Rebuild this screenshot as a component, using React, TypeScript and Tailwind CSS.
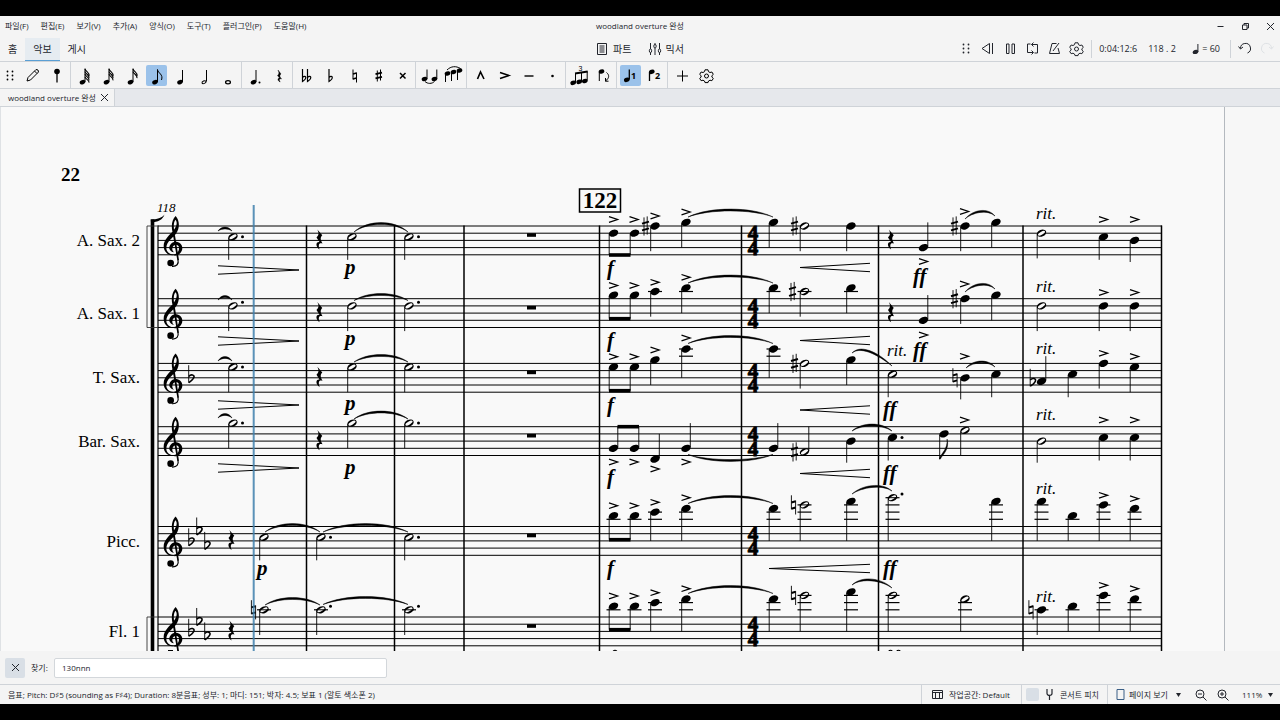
import { useState } from 'react';

type Accidental = 'sharp' | 'flat' | 'natural';

interface Note {
  x: number;
  /** Half spaces below the top line */
  p: number;
  half?: boolean;
  up?: boolean;
  dot?: boolean;
  acc?: Accidental;
  accX?: number;
  beam?: number;
  flag?: boolean;
}

type Slur = [x1: number, y1: number, x2: number, y2: number, peak: number];
type Mark = [x: number, y: number];

interface Staff {
  name: string;
  top: number;
  flats: Mark[];
  notes: Note[];
  rests: number[];
  slurs: Slur[];
  accents: Mark[];
  dims: number[];
  crescs: Mark[];
  beam: number;
  texts: { t: string; x: number; y: number }[];
}

const HALF = 3.6;
const BARLINES = [306.5, 394.5, 464, 599.5, 741.5, 878.5, 1023, 1161.5];
const THREE_FLATS: Mark[] = [[191, 4], [199, 1], [207, 5]];

const STAVES: Staff[] = [
  {
    name: 'A. Sax. 2',
    top: 226,
    flats: [],
    beam: 255,
    notes: [
      { x: 233, p: 3, half: true, dot: true },
      { x: 352, p: 3, half: true },
      { x: 409, p: 3, half: true, dot: true },
      { x: 613.5, p: 2, beam: 255 },
      { x: 634.5, p: 2, beam: 255 },
      { x: 655, p: 0, acc: 'sharp', accX: 645.5 },
      { x: 686, p: -1 },
      { x: 773.5, p: -1 },
      { x: 804.5, p: 0, half: true, acc: 'sharp', accX: 794.5 },
      { x: 851, p: 0 },
      { x: 923.5, p: 6, up: true },
      { x: 965, p: 0, acc: 'sharp', accX: 954.5 },
      { x: 996, p: -1 },
      { x: 1041.5, p: 2, half: true },
      { x: 1103.5, p: 3 },
      { x: 1134.5, p: 4 },
    ],
    rests: [319.5, 891],
    slurs: [[218, 231, 232, 231, 228], [354, 232, 408, 232, 223.5], [688, 217, 773, 217, 210], [965, 219, 995, 216, 211.5]],
    accents: [[613.5, 219.5], [634, 219.5], [655, 216], [686, 212], [923.5, 261.5], [964.5, 211.5], [1103.5, 219.5], [1134.5, 219.5]],
    dims: [270],
    crescs: [[800, 267.5]],
    texts: [
      { t: 'p', x: 345, y: 274 },
      { t: 'f', x: 607, y: 275 },
      { t: 'ff', x: 913, y: 283 },
      { t: 'rit.', x: 1036, y: 219 },
    ],
  },
  {
    name: 'A. Sax. 1',
    top: 298.7,
    flats: [],
    beam: 318.7,
    notes: [
      { x: 233, p: 2, half: true, dot: true },
      { x: 352, p: 2, half: true },
      { x: 409, p: 2, half: true, dot: true },
      { x: 613.5, p: -1, beam: 318.7 },
      { x: 634.5, p: -1, beam: 318.7 },
      { x: 655, p: -2 },
      { x: 686, p: -3 },
      { x: 773.5, p: -3 },
      { x: 804.5, p: -2, half: true, acc: 'sharp', accX: 792.5 },
      { x: 851, p: -3 },
      { x: 923.5, p: 6, up: true },
      { x: 965, p: 0, acc: 'sharp', accX: 954.5 },
      { x: 996, p: -1 },
      { x: 1041.5, p: 2, half: true },
      { x: 1103.5, p: 2 },
      { x: 1134.5, p: 2 },
    ],
    rests: [319.5, 891],
    slurs: [[218, 300, 232, 300, 296.5], [354, 300.5, 408, 300.5, 294.5], [688, 283, 773, 283, 276], [965, 292, 995, 289, 284.5]],
    accents: [[613.5, 285.5], [634, 285.5], [655, 282.3], [686, 277.3], [923.5, 335], [964.5, 284], [1103.5, 292.5], [1134.5, 292.5]],
    dims: [341],
    crescs: [[800, 340.5]],
    texts: [
      { t: 'p', x: 345, y: 345 },
      { t: 'f', x: 607, y: 347 },
      { t: 'ff', x: 913, y: 357 },
      { t: 'rit.', x: 1036, y: 292 },
    ],
  },
  {
    name: 'T. Sax.',
    top: 363.4,
    flats: [[191, 4]],
    beam: 390.7,
    notes: [
      { x: 233, p: 1, half: true, dot: true },
      { x: 352, p: 1, half: true },
      { x: 409, p: 1, half: true, dot: true },
      { x: 613.5, p: 1, beam: 390.7 },
      { x: 634.5, p: 1, beam: 390.7 },
      { x: 655, p: -1 },
      { x: 686, p: -4 },
      { x: 773.5, p: -4 },
      { x: 804.5, p: 0, half: true, acc: 'sharp', accX: 794.5 },
      { x: 851, p: -1 },
      { x: 892.5, p: 3, half: true },
      { x: 965, p: 4, acc: 'natural', accX: 955 },
      { x: 996, p: 3 },
      { x: 1041.5, p: 5, up: true, acc: 'flat', accX: 1032.5 },
      { x: 1072.5, p: 3 },
      { x: 1103.5, p: 0 },
      { x: 1134.5, p: 1 },
    ],
    rests: [319.5],
    slurs: [[218, 361, 232, 361, 357.5], [354, 362, 408, 362, 355.5], [688, 343.5, 773, 343.5, 336.5], [852, 353, 892, 366, 352.5], [966, 368, 995, 367, 362]],
    accents: [[613.5, 356.7], [634, 356.7], [655, 350], [686, 338], [964.5, 356.3], [1103.5, 353.3], [1134.5, 356.5]],
    dims: [405],
    crescs: [[800, 410]],
    texts: [
      { t: 'p', x: 345, y: 410 },
      { t: 'f', x: 607, y: 412 },
      { t: 'ff', x: 883, y: 416 },
      { t: 'rit.', x: 887, y: 356 },
      { t: 'rit.', x: 1036, y: 354 },
    ],
  },
  {
    name: 'Bar. Sax.',
    top: 426.7,
    flats: [],
    beam: 426.7,
    notes: [
      { x: 233, p: -1, half: true, dot: true },
      { x: 352, p: -1, half: true },
      { x: 409, p: -1, half: true, dot: true },
      { x: 613.5, p: 6, up: true, beam: 426.7 },
      { x: 634.5, p: 6, up: true, beam: 426.7 },
      { x: 655, p: 9, up: true },
      { x: 686, p: 6, up: true },
      { x: 773.5, p: 6, up: true },
      { x: 804.5, p: 7, half: true, up: true, acc: 'sharp', accX: 794.5 },
      { x: 851, p: 4 },
      { x: 892.5, p: 3, dot: true },
      { x: 944, p: 2, flag: true },
      { x: 965, p: 1, half: true },
      { x: 1041.5, p: 4, half: true },
      { x: 1103.5, p: 3 },
      { x: 1134.5, p: 3 },
    ],
    rests: [319.5],
    slurs: [[218, 418, 232, 418, 414.5], [354, 419, 408, 419, 412], [688, 454.5, 773, 454.5, 460.5], [852, 431, 892, 431, 425]],
    accents: [[613.5, 462], [634, 462], [655, 469], [686, 462], [964.5, 420], [1103.5, 420], [1134.5, 420]],
    dims: [468],
    crescs: [[800, 473.5]],
    texts: [
      { t: 'p', x: 345, y: 474 },
      { t: 'f', x: 607, y: 484 },
      { t: 'ff', x: 883, y: 480 },
      { t: 'rit.', x: 1036, y: 420 },
    ],
  },
  {
    name: 'Picc.',
    top: 526.5,
    flats: THREE_FLATS,
    beam: 539.7,
    notes: [
      { x: 264, p: 3, half: true },
      { x: 321, p: 3, half: true, dot: true },
      { x: 409, p: 3, half: true, dot: true },
      { x: 613.5, p: -3, beam: 539.7 },
      { x: 634.5, p: -3, beam: 539.7 },
      { x: 655, p: -4 },
      { x: 686, p: -5 },
      { x: 773.5, p: -5 },
      { x: 804.5, p: -6, half: true, acc: 'natural', accX: 793.5 },
      { x: 851, p: -7 },
      { x: 892.5, p: -8, half: true, dot: true },
      { x: 996, p: -7 },
      { x: 1041.5, p: -7 },
      { x: 1072.5, p: -3 },
      { x: 1103.5, p: -6 },
      { x: 1134.5, p: -5 },
    ],
    rests: [231.5],
    slurs: [[265, 532, 320, 532, 524.5], [323, 532, 408, 532, 524.5], [688, 503.5, 773, 503.5, 496.5], [852, 494, 892, 491, 486.5]],
    accents: [[613.5, 505.7], [634, 505.7], [655, 502.3], [686, 497.7], [1103.5, 495.3], [1134.5, 498.7]],
    dims: [],
    crescs: [[769, 568.5]],
    texts: [
      { t: 'p', x: 257, y: 575 },
      { t: 'f', x: 607, y: 575 },
      { t: 'ff', x: 883, y: 575 },
      { t: 'rit.', x: 1036, y: 494 },
    ],
  },
  {
    name: 'Fl. 1',
    top: 617,
    flats: THREE_FLATS,
    beam: 629.7,
    notes: [
      { x: 264, p: -2, half: true, acc: 'natural', accX: 253.5 },
      { x: 321, p: -2, half: true, dot: true },
      { x: 409, p: -2, half: true, dot: true },
      { x: 613.5, p: -3, beam: 629.7 },
      { x: 634.5, p: -3, beam: 629.7 },
      { x: 655, p: -4 },
      { x: 686, p: -5 },
      { x: 773.5, p: -5 },
      { x: 804.5, p: -6, half: true, acc: 'natural', accX: 793.5 },
      { x: 851, p: -7 },
      { x: 892.5, p: -6, half: true },
      { x: 965, p: -5, half: true },
      { x: 1041.5, p: -2, acc: 'natural', accX: 1031 },
      { x: 1072.5, p: -3 },
      { x: 1103.5, p: -6 },
      { x: 1134.5, p: -5 },
    ],
    rests: [231.5],
    slurs: [[265, 605, 320, 605, 598.5], [323, 604.5, 408, 604.5, 597.5], [688, 593.5, 773, 593.5, 586.5], [852, 585, 892, 588, 580]],
    accents: [[613.5, 596], [634, 596], [655, 592.7], [686, 588.7], [1103.5, 585.3], [1134.5, 588.7]],
    dims: [],
    crescs: [],
    texts: [{ t: 'rit.', x: 1036, y: 602 }],
  },
];

/* ---------- score glyphs ---------- */

const TrebleClef = ({ top }: { top: number }) => (
  <g transform={`translate(50 ${top - 66}) scale(0.3333)`}>
    <path d="M377 168 C390 182 389 206 379 220 C367 236 350 244 349 264 C349 277 361 284 374 284 C362 290 341 280 341 258 C341 238 361 224 371 211 C380 198 383 188 377 179 C371 184 370 198 373 214 L387 300 L382 301 L367 214 C363 194 367 178 377 168Z" />
    <path d="M373 287 C388 286 397 276 397 264 C397 253 388 245 376 245 C364 246 357 256 358 266 C360 272 366 276 372 277 C366 271 366 266 368 261 C370 257 373 254 378 254 C386 255 388 261 387 267 C386 276 380 281 373 283Z" />
    <path d="M384 299 C387 312 380 320 366 319" fill="none" stroke="#000" strokeWidth="3.5" />
    <circle cx="362" cy="309" r="10" />
  </g>
);

const AccidentalGlyph = ({ kind, x, y }: { kind: Accidental; x: number; y: number }) => (
  <g transform={`translate(${x} ${y})`} fill="none" stroke="#000" strokeWidth="0.9">
    {kind === 'sharp' && (
      <>
        <path d="M-1.5 -8.6V9.6M1.7 -9.6V8.6" />
        <path d="M-3.5 -2.4L3.5 -4.4M-3.5 4.4L3.5 2.4" strokeWidth="2" />
      </>
    )}
    {kind === 'natural' && (
      <>
        <path d="M-2.1 -9.6V4.4M2.1 -4.4V9.6" />
        <path d="M-2.1 -2.4L2.1 -3.6M-2.1 3.8L2.1 2.6" strokeWidth="2" />
      </>
    )}
    {kind === 'flat' && (
      <>
        <path d="M-2.3 -12.6V5" />
        <path d="M-2.2 -1.4C0 -4 3.6 -3 3 -0.6C2.6 1.6 -0.4 3.4 -2.2 4.8" strokeWidth="1.6" />
      </>
    )}
  </g>
);

const QuarterRest = ({ x, y }: { x: number; y: number }) => (
  <path
    transform={`translate(${x} ${y})`}
    d="M-2.2 -10.6L2.8 -4.8C0.6 -2.4 0.8 -0.8 3 3.6C-0.6 2.2 -1.6 4.8 0.2 9.6C-4 6.8 -4.2 1.6 0 2L-3 -2.6C-0.6 -5 -0.4 -7 -2.2 -10.6Z"
  />
);

const NoteGlyph = ({ note, top }: { note: Note; top: number }) => {
  const { x, p, up } = note;
  const y = top + p * HALF;
  const length = p >= 4 && !up ? 6 : p === 3 ? 6.4 : 7;
  const stemEnd = note.beam ?? (up ? y - length * HALF : top + Math.max(p + length, 4) * HALF);
  const stemX = up ? x + 4.3 : x - 4.3;
  const ledgers: number[] = [];
  for (let l = -2; l >= p; l -= 2) ledgers.push(l);

  return (
    <g>
      {ledgers.map((l) => (
        <path key={l} d={`M${x - 7} ${top + l * HALF}h14`} stroke="#000" strokeWidth="1.2" />
      ))}
      <path d={`M${stemX} ${y + (up ? -1 : 1)}V${stemEnd}`} stroke="#000" strokeWidth="0.9" />
      <ellipse cx={x} cy={y} rx="4.9" ry="3.4" transform={`rotate(-22 ${x} ${y})`} />
      {note.half && (
        <ellipse cx={x} cy={y} rx="4" ry="1.5" fill="#f9f9f9" transform={`rotate(-31 ${x} ${y})`} />
      )}
      {note.half && p <= -2 && p % 2 === 0 && (
        <path d={`M${x - 5} ${y}h10`} stroke="#000" strokeWidth="1" />
      )}
      {note.dot && <circle cx={x + 9.5} cy={p % 2 === 0 ? y - HALF : y} r="1.5" />}
      {note.acc && <AccidentalGlyph kind={note.acc} x={note.accX ?? x - 10} y={y} />}
      {note.flag && (
        <path
          d={`M${stemX - 0.4} ${stemEnd}C${stemX + 2} ${stemEnd - 7} ${stemX + 8} ${stemEnd - 9} ${stemX + 7.4} ${stemEnd - 20}C${stemX + 10} ${stemEnd - 9} ${stemX + 3} ${stemEnd - 5} ${stemX + 0.6} ${stemEnd}Z`}
          stroke="#000"
          strokeWidth="0.5"
        />
      )}
    </g>
  );
};

const SlurGlyph = ({ slur: [x1, y1, x2, y2, peak] }: { slur: Slur }) => {
  const rise = (peak - (y1 + y2) / 2) / 0.75;
  const dx = (x2 - x1) * 0.25;
  const t = 1.2;
  return (
    <path
      d={`M${x1} ${y1}C${x1 + dx} ${y1 + rise - t} ${x2 - dx} ${y2 + rise - t} ${x2} ${y2}C${x2 - dx} ${y2 + rise + t} ${x1 + dx} ${y1 + rise + t} ${x1} ${y1}Z`}
      stroke="#000"
      strokeWidth="0.5"
    />
  );
};

const StaffGlyph = ({ staff }: { staff: Staff }) => {
  const { top } = staff;
  return (
    <g>
      <text x="140" y={top + 20} textAnchor="end" className="font-[Liberation_Serif,serif] text-[17px]">
        {staff.name}
      </text>
      {[0, 2, 4, 6, 8].map((l) => (
        <path key={l} d={`M158 ${top + l * HALF}H1162`} stroke="#000" strokeWidth="1" />
      ))}
      <TrebleClef top={top} />
      {staff.flats.map(([x, p]) => (
        <AccidentalGlyph key={x} kind="flat" x={x} y={top + p * HALF} />
      ))}
      {staff.rests.map((x) => (
        <QuarterRest key={x} x={x} y={top + 14} />
      ))}
      <rect x="527" y={top + 7.2} width="9" height="3.6" />
      <text
        textAnchor="middle"
        stroke="#000"
        strokeWidth="0.9"
        className="font-[Liberation_Serif,serif] text-[21px] font-bold"
      >
        <tspan x="753" y={top + 14.4}>4</tspan>
        <tspan x="753" y={top + 28.8}>4</tspan>
      </text>
      {staff.notes.map((n) => (
        <NoteGlyph key={n.x} note={n} top={top} />
      ))}
      <path
        d={staff.notes.some((n) => n.beam && n.up) ? `M617.5 ${staff.beam}H639` : `M609 ${staff.beam}H630.5`}
        stroke="#000"
        strokeWidth="3.6"
      />
      {staff.slurs.map((s) => (
        <SlurGlyph key={s[0]} slur={s} />
      ))}
      {staff.accents.map(([x, y]) => (
        <path key={x} d={`M${x - 4.5} ${y - 2.8}L${x + 4} ${y}L${x - 4.5} ${y + 2.8}`} fill="none" stroke="#000" strokeWidth="1.3" />
      ))}
      {staff.dims.map((y) => (
        <path key={y} d={`M218 ${y - 4.2}L299 ${y}L218 ${y + 4.2}`} fill="none" stroke="#000" strokeWidth="1" />
      ))}
      {staff.crescs.map(([x, y]) => (
        <path key={y} d={`M870 ${y - 4.2}L${x} ${y}L870 ${y + 4.2}`} fill="none" stroke="#000" strokeWidth="1" />
      ))}
      {staff.texts.map(({ t, x, y }) => (
        <text
          key={`${t}${x}`}
          x={x}
          y={y}
          className={
            t === 'rit.'
              ? 'font-[Liberation_Serif,serif] text-[17px] italic'
              : 'font-[Liberation_Serif,serif] text-[21px] font-bold italic'
          }
        >
          {t}
        </text>
      ))}
    </g>
  );
};

const Score = () => (
  <svg width="1280" height="544" viewBox="0 107 1280 544" className="block shrink-0" role="img" aria-label="Score">
    <rect x="1224" y="107" width="56" height="544" fill="#f7f7f7" />
    <path d="M1224.5 107V651" stroke="#b4b9bf" />
    <path d="M0.5 107V651" stroke="#dfe2e5" />
    <text x="61" y="181" className="font-[Liberation_Serif,serif] text-[19px] font-bold">22</text>
    <text x="157" y="212" className="font-[Liberation_Serif,serif] text-[13px] italic">118</text>
    <rect x="579.5" y="189" width="41" height="23" fill="none" stroke="#000" strokeWidth="1.5" />
    <text x="600" y="208" textAnchor="middle" className="font-[Liberation_Serif,serif] text-[23px] font-bold">122</text>

    {STAVES.map((s) => (
      <StaffGlyph key={s.name} staff={s} />
    ))}

    {/* barlines, system line and brackets */}
    {BARLINES.map((x) => (
      <path key={x} d={`M${x} 225.5V651`} stroke="#000" strokeWidth="1.5" />
    ))}
    <path d="M158 225.5V651" stroke="#000" strokeWidth="1.2" />
    <path d="M152.5 219.5V651" stroke="#000" strokeWidth="3.6" />
    <path d="M150.7 219.4C157 219.4 162 218 164.5 214.5C163 219.5 158 222.4 151 222.4Z" />
    <path d="M158 226H147V327.5H158M158 617H147V651" fill="none" stroke="#333" strokeWidth="0.9" />

    {/* tops of the marks below the fold */}
    <path
      d="M168 650.5h5M613 651.5q2 -2.5 4 0M888.500 651.5q2 -2.5 4 0M896.500 651.5q2 -2.5 4 0"
      fill="none"
      stroke="#000"
      strokeWidth="1.2"
    />

    {/* playback cursor */}
    <rect x="252.7" y="205" width="2" height="446" fill="#3f80ad" opacity="0.85" />
  </svg>
);

/* ---------- toolbar icons ---------- */

const Icon = ({ children, size = 21 }: { children: React.ReactNode; size?: number }) => (
  <svg
    width={size}
    height={size}
    viewBox={`0 0 ${size} ${size}`}
    fill="none"
    stroke="currentColor"
    strokeWidth="1"
    aria-hidden="true"
    className="block shrink-0"
  >
    {children}
  </svg>
);

const Head = ({ x, y, open }: { x: number; y: number; open?: boolean }) => (
  <ellipse
    cx={x}
    cy={y}
    rx={open ? 2.1 : 2.9}
    ry={open ? 1.3 : 2.1}
    fill={open ? 'none' : 'currentColor'}
    stroke={open ? 'currentColor' : 'none'}
    transform={`rotate(-22 ${x} ${y})`}
  />
);

const FlaggedNote = ({ flags }: { flags: number }) => (
  <Icon>
    <Head x={8.5} y={17.2} />
    <path d="M11 17V3.5" />
    {Array.from({ length: flags }, (_, i) => (
      <path key={i} d={`M11 ${4 + i * 2.6}C12 ${7 + i * 2.6} 15.5 ${7 + i * 2.6} 15 ${11 + i * 2.2}`} strokeWidth="1.1" />
    ))}
  </Icon>
);

const DotsIcon = () => (
  <Icon>
    {[6.5, 10.5, 14.5].map((y) => (
      <g key={y} fill="currentColor" stroke="none">
        <circle cx="7.5" cy={y} r="0.9" />
        <circle cx="12.5" cy={y} r="0.9" />
      </g>
    ))}
  </Icon>
);

const GearIcon = () => (
  <Icon>
    <path d="M9 4.8h3l.5 1.9 1.5.8 1.9-.5 1.4 2.4-1.4 1.3v1.4l1.4 1.3-1.4 2.3-1.9-.5-1.5.8-.5 1.6H9l-.5-1.6-1.5-.8-1.9.5-1.4-2.3 1.4-1.3v-1.4L3.7 9.4l1.4-2.4 1.9.5 1.5-.8z" />
    <circle cx="10.5" cy="11" r="2" />
  </Icon>
);

const NOTE_TOOLS: { label: string; icon: React.ReactNode }[][] = [
  [
    { label: '64분음표', icon: <FlaggedNote flags={4} /> },
    { label: '32분음표', icon: <FlaggedNote flags={3} /> },
    { label: '16분음표', icon: <FlaggedNote flags={2} /> },
    {
      label: '8분음표',
      icon: (
        <Icon>
          <Head x={9} y={17.2} />
          <path d="M11.5 17V4.5C12 8.5 17.5 9 15.5 15" />
        </Icon>
      ),
    },
    { label: '4분음표', icon: <Icon><Head x={10} y={17.2} /><path d="M12.5 17V5" /></Icon> },
    { label: '2분음표', icon: <Icon><Head x={10} y={17.2} open /><path d="M12.5 16.5V5" /></Icon> },
    { label: '온음표', icon: <Icon><ellipse cx="10" cy="17.2" rx="2.4" ry="1.6" strokeWidth="1.3" /></Icon> },
  ],
  [
    { label: '점음표', icon: <Icon><Head x={8.5} y={17.2} /><path d="M11 17V5" /><circle cx="14.5" cy="17.5" r="1" fill="currentColor" stroke="none" /></Icon> },
    {
      label: '쉼표',
      icon: (
        <Icon>
          <path d="M9 5l3 4c-2 1.6-1 3 .6 5-2.6-.8-2.8 1-1.4 3-3-1.4-2.8-4-.6-4L8.5 10.5C10.5 8.8 10.2 7.5 9 5z" fill="currentColor" strokeWidth="0.4" />
        </Icon>
      ),
    },
  ],
  [
    { label: '겹내림표', icon: <Icon><path d="M6.5 4v12.5C12 13 9.5 9.5 6.5 12.5M11.5 4v12.5C17 13 14.5 9.5 11.5 12.5" strokeWidth="1.2" /></Icon> },
    { label: '내림표', icon: <Icon><path d="M9 4v12.5C14.5 13 12 9.5 9 12.5" strokeWidth="1.2" /></Icon> },
    { label: '제자리표', icon: <Icon><path d="M9 4.5V14.5M12.5 7.5V17.5" /><path d="M9 9l3.5-1M9 14l3.5-1" strokeWidth="1.6" /></Icon> },
    { label: '올림표', icon: <Icon><path d="M9.3 5.5v11M12.5 4.5v11" /><path d="M7.5 9.2l6.5-1.6M7.5 13.4l6.5-1.6" strokeWidth="1.7" /></Icon> },
    { label: '겹올림표', icon: <Icon><path d="M8 8l5.500 5.500M13.500 8L8 13.500" strokeWidth="1.5" /></Icon> },
  ],
  [
    { label: '붙임줄', icon: <Icon><Head x={5.5} y={14} /><path d="M8 14V4.500M17.800 14V4.500M6 16.500C8.500 19 13 19 15.500 16.500" /><Head x={15.400} y={14} /></Icon> },
    { label: '이음줄', icon: <Icon><path d="M2.5 17V8M8.5 16V6.5M14.5 15V5M4 5C8 1 13 .8 17.5 3.5" /><Head x={4.5} y={8.5} /><Head x={10.5} y={7} /><Head x={16.5} y={5.5} /></Icon> },
  ],
  [
    { label: '마르카토', icon: <Icon><path d="M7.5 14l3-7 3.5 7" strokeWidth="1.6" /></Icon> },
    { label: '악센트', icon: <Icon><path d="M6 7.5l9 3-9 3" strokeWidth="1.5" /></Icon> },
    { label: '테누토', icon: <Icon><path d="M6.5 11h9" strokeWidth="1.4" /></Icon> },
    { label: '스타카토', icon: <Icon><circle cx="10.5" cy="11" r="1.3" fill="currentColor" stroke="none" /></Icon> },
  ],
  [
    {
      label: '잇단음표',
      icon: (
        <Icon>
          <Head x={4.2} y={17.8} />
          <Head x={10.2} y={16.8} />
          <Head x={15.8} y={16} />
          <path d="M6.5 17.5V8.5M12.5 16.5V7.5M18.2 15.5V6.5" />
          <path d="M6 8.5L18.7 6.5" strokeWidth="1.8" />
          <text x="9.5" y="6" fill="currentColor" stroke="none" className="font-[Liberation_Sans,sans-serif] text-[7px]">3</text>
        </Icon>
      ),
    },
    { label: '꼬리 뒤집기', icon: <Icon><Head x={8.5} y={6.5} /><path d="M6.3 7V16M13.5 7.5C16.5 10 16.5 13 12.5 16M12.5 13v3.2h3" /></Icon> },
  ],
  [
    {
      label: '성부 1',
      icon: (
        <Icon>
          <Head x={6.8} y={14.8} />
          <path d="M9.3 14.5V4.5" strokeWidth="1.3" />
          <text x="11" y="14" fill="currentColor" stroke="none" className="font-[Open_Sans,sans-serif] text-[9px] font-bold">1</text>
        </Icon>
      ),
    },
    {
      label: '성부 2',
      icon: (
        <Icon>
          <Head x={7.8} y={6.8} />
          <path d="M5.5 7V16" strokeWidth="1.3" />
          <text x="11" y="14" fill="currentColor" stroke="none" className="font-[Open_Sans,sans-serif] text-[9px] font-bold">2</text>
        </Icon>
      ),
    },
  ],
];

const ToolButton = ({
  label,
  active,
  onClick,
  children,
}: {
  label: string;
  active?: boolean;
  onClick?: () => void;
  children: React.ReactNode;
}) => (
  <button
    type="button"
    title={label}
    aria-label={label}
    onClick={onClick}
    className={`flex h-[21px] w-[21px] shrink-0 items-center justify-center rounded-xs ${active ? 'bg-[#9bc2ea]' : 'hover:bg-[#e4e7ea]'}`}
  >
    {children}
  </button>
);

const ToolGroup = ({ children }: { children: React.ReactNode }) => (
  <div className="flex h-full items-center gap-[3px] border-r border-[#cfd3d8] pl-[3px] pr-[2px]">{children}</div>
);

const Caret = () => (
  <svg width="5" height="4" viewBox="0 0 5 4" aria-hidden="true" className="shrink-0">
    <path d="M0 0h5L2.5 4z" fill="currentColor" />
  </svg>
);

const CrossIcon = () => (
  <Icon size={9}>
    <path d="M1 1l7 7M8 1L1 8" />
  </Icon>
);

const MENUS = ['파일(F)', '편집(E)', '보기(V)', '추가(A)', '양식(O)', '도구(T)', '플러그인(P)', '도움말(H)'];
const TABS = ['홈', '악보', '게시'];

const TitleBar = () => (
  <div className="grid h-5 shrink-0 grid-cols-[1fr_auto_1fr] items-center">
    <nav className="flex gap-3 pl-[5px]">
      {MENUS.map((m) => (
        <button key={m} type="button">
          {m}
        </button>
      ))}
    </nav>
    <h1>woodland overture 완성</h1>
    <div className="flex items-center justify-end gap-4 pr-[5px]">
      <button type="button" aria-label="최소화">
        <Icon size={9}><path d="M1.5 4.5h6" /></Icon>
      </button>
      <button type="button" aria-label="창 복원">
        <Icon size={9}><path d="M1.5 3h4.5v4.5H1.5zM3 3V1.5h4.5V6H6" /></Icon>
      </button>
      <button type="button" aria-label="닫기">
        <CrossIcon />
      </button>
    </div>
  </div>
);

const NavBar = () => {
  const [tab, setTab] = useState('악보');
  return (
    <div className="grid h-[26px] shrink-0 grid-cols-[1fr_auto_1fr] items-center border-b border-[#cfd3d8]">
      <div className="flex h-full items-end text-[10px]">
        {TABS.map((t) => (
          <button
            key={t}
            type="button"
            onClick={() => setTab(t)}
            className={`h-[23px] border-b px-2 ${t === tab ? 'border-[#5a9fd4] bg-[#e6ecf1]' : 'border-transparent'}`}
          >
            {t}
          </button>
        ))}
      </div>

      <div className="flex items-center gap-4 text-[10px]">
        <button type="button" className="flex items-center gap-[5px]">
          <Icon size={12}>
            <path d="M1.5 .5h9v11h-9zM3.5 3h5M3.5 5h5M3.5 7h5M3.5 9h5" />
          </Icon>
          파트
        </button>
        <button type="button" className="flex items-center gap-1">
          <Icon size={14}>
            <path d="M2.5 1v6M2.5 10.5V13M7 1v1.5M7 6v7M11.5 1v6M11.5 10.5V13" />
            <ellipse cx="2.5" cy="8.8" rx="1.2" ry="1.8" />
            <ellipse cx="7" cy="4.2" rx="1.2" ry="1.8" />
            <ellipse cx="11.5" cy="8.8" rx="1.2" ry="1.8" />
          </Icon>
          믹서
        </button>
      </div>

      <div className="flex h-full items-center justify-end pr-[3px] text-[9px] whitespace-nowrap">
        <div className="flex items-center gap-px">
          <ToolButton label="이동"><DotsIcon /></ToolButton>
          <ToolButton label="되감기"><Icon><path d="M11.5 5.5v10L4 10.500zM14.500 5v11" /></Icon></ToolButton>
          <ToolButton label="일시 정지"><Icon><path d="M6.5 6h2.5v9.5H6.5zM12 6h2.5v9.5H12z" /></Icon></ToolButton>
          <ToolButton label="반복 재생">
            <Icon><path d="M8.5 6H5.5v8.5H11M12.5 15H15.5V6.5H9.5M11.5 4.5l-2 2 2 2M9.5 12.5l2 2-2 2" /></Icon>
          </ToolButton>
          <ToolButton label="메트로놈"><Icon><path d="M8 5.5h4.5M8 5.5L5.5 15.5h10L14 10M9 13L15 5" /></Icon></ToolButton>
          <ToolButton label="재생 설정"><GearIcon /></ToolButton>
        </div>
        <div className="ml-1 h-[18px] w-px bg-[#cfd3d8]" />
        <span className="ml-[7px] w-10">0:04:12:6</span>
        <span className="ml-[9px] w-[27px]">118 . 2</span>
        <button type="button" className="ml-4 flex items-center gap-px">
          <Icon size={10}>
            <Head x={4.5} y={8} />
            <path d="M6.9 8V0" />
          </Icon>
          = 60
        </button>
        <div className="ml-[10px] h-[18px] w-px bg-[#cfd3d8]" />
        <div className="ml-1 flex">
          <ToolButton label="실행 취소"><Icon><path d="M5.5 10.5A5 5 0 1 1 12.5 15M3.5 8.5l2 2.5 2.5-2" /></Icon></ToolButton>
          <span className="text-[#dfe2e5]">
            <ToolButton label="다시 실행"><Icon><path d="M15.5 10.5A5 5 0 1 0 8.5 15M17.5 8.5l-2 2.5-2.5-2" /></Icon></ToolButton>
          </span>
        </div>
      </div>
    </div>
  );
};

const NoteToolbar = () => {
  const [duration, setDuration] = useState('8분음표');
  const [voice, setVoice] = useState('성부 1');

  const handleClick = (label: string) => {
    if (label.startsWith('성부')) setVoice(label);
    else if (label.endsWith('분음표')) setDuration(label);
  };

  return (
    <div className="flex h-[27px] shrink-0 items-center border-b border-[#cfd3d8] text-black">
      <div className="flex h-full items-center gap-[3px] border-r border-[#cfd3d8] pr-[2px]">
        <div className="flex w-5 justify-center"><DotsIcon /></div>
        <ToolButton label="음표 입력">
          <Icon><path d="M4 16l1-3.500 8-8 2 .5.500 2-8 8zM11.500 6l2.500 2.500" /></Icon>
        </ToolButton>
        <ToolButton label="입력 위치">
          <Icon>
            <circle cx="10" cy="6.5" r="2.8" fill="currentColor" stroke="none" />
            <path d="M10 6v11.500" strokeWidth="1.3" />
          </Icon>
        </ToolButton>
      </div>
      {NOTE_TOOLS.map((group) => (
        <ToolGroup key={group[0].label}>
          {group.map(({ label, icon }) => (
            <ToolButton
              key={label}
              label={label}
              active={label === duration || label === voice}
              onClick={() => handleClick(label)}
            >
              {icon}
            </ToolButton>
          ))}
        </ToolGroup>
      ))}
      <div className="flex items-center gap-[3px] pl-1">
        <ToolButton label="추가"><Icon><path d="M10.5 5.5v11M5 11h11" /></Icon></ToolButton>
        <ToolButton label="도구 모음 설정"><GearIcon /></ToolButton>
      </div>
    </div>
  );
};

const FindBar = () => (
  <form className="flex h-[33px] shrink-0 items-center pl-[5px]" onSubmit={(e) => e.preventDefault()}>
    <button type="button" aria-label="찾기 닫기" className="flex h-5 w-5 items-center justify-center rounded-xs bg-[#d9dfe6]">
      <CrossIcon />
    </button>
    <label htmlFor="find" className="ml-[6px] w-[23px]">
      찾기:
    </label>
    <input
      id="find"
      type="text"
      defaultValue="130nnn"
      className="h-5 w-[333px] rounded-xs border border-[#d3d7db] bg-white px-[7px] outline-none"
    />
  </form>
);

const StatusBar = () => (
  <footer className="flex h-5 shrink-0 items-center border-t border-[#cfd3d8]">
    <p className="flex-1 pl-2">
      음표; Pitch: D♯5 (sounding as F♯4); Duration: 8분음표; 성부: 1; 마디: 151; 박자: 4.5; 보표 1 (알토 색소폰 2)
    </p>
    <button type="button" className="flex h-full w-[100px] items-center gap-[6px] border-l border-[#cfd3d8] pl-[10px]">
      <Icon size={11}>
        <path d="M.5 1.5h10v8H.5zM.5 3.5h10M3.5 3.5v6M7.5 3.5v6" />
      </Icon>
      작업공간: Default
    </button>
    <label className="flex h-full w-[86px] items-center border-l border-[#cfd3d8] pl-1">
      <input type="checkbox" className="h-[13px] w-[13px] appearance-none rounded-xs bg-[#d9dfe6]" />
      <span className="mx-[5px]">
        <Icon size={11}>
          <path d="M3 0v4.5c0 2.5 5 2.5 5 0V0M5.5 6.5V11" strokeWidth="1.2" />
        </Icon>
      </span>
      콘서트 피치
    </label>
    <div className="flex h-full items-center border-l border-[#cfd3d8] pl-[7px]">
      <Icon size={11}>
        <path d="M2 .5h7v10H2z" stroke="#3b5f86" />
      </Icon>
      <select aria-label="보기 방식" className="ml-[3px] w-[47px] appearance-none bg-transparent">
        <option>페이지 보기</option>
      </select>
      <Caret />
      <button type="button" aria-label="축소" className="ml-[14px]">
        <Icon size={12}><circle cx="5" cy="5" r="4" /><path d="M3 5h4M8 8l3.5 3.5" /></Icon>
      </button>
      <button type="button" aria-label="확대" className="ml-[10px]">
        <Icon size={12}><circle cx="5" cy="5" r="4" /><path d="M3 5h4M5 3v4M8 8l3.5 3.5" /></Icon>
      </button>
      <select aria-label="확대 비율" className="ml-[13px] w-[26px] appearance-none bg-transparent">
        <option>111%</option>
      </select>
      <span className="pr-[7px]">
        <Caret />
      </span>
    </div>
  </footer>
);

export default function App() {
  return (
    <div className="flex h-screen flex-col bg-black py-4">
      <div className="flex min-h-0 flex-1 flex-col bg-[#f4f4f4] font-[Open_Sans,DejaVu_Sans,Noto_Sans_CJK_KR,sans-serif] text-[8px] leading-3 text-[#22252c]">
        <TitleBar />
        <NavBar />
        <NoteToolbar />
        <div className="flex h-[18px] shrink-0 border-b border-[#cfd3d8] bg-[#e6e8ec]">
          <div className="flex items-center gap-1 border-r border-[#cfd3d8] bg-[#f4f4f4] pl-2 pr-[5px]">
            <span>woodland overture 완성</span>
            <button type="button" aria-label="탭 닫기">
              <CrossIcon />
            </button>
          </div>
        </div>
        <main className="flex min-h-0 flex-1 overflow-hidden bg-[#f9f9f9]">
          <Score />
        </main>
        <FindBar />
        <StatusBar />
      </div>
    </div>
  );
}
